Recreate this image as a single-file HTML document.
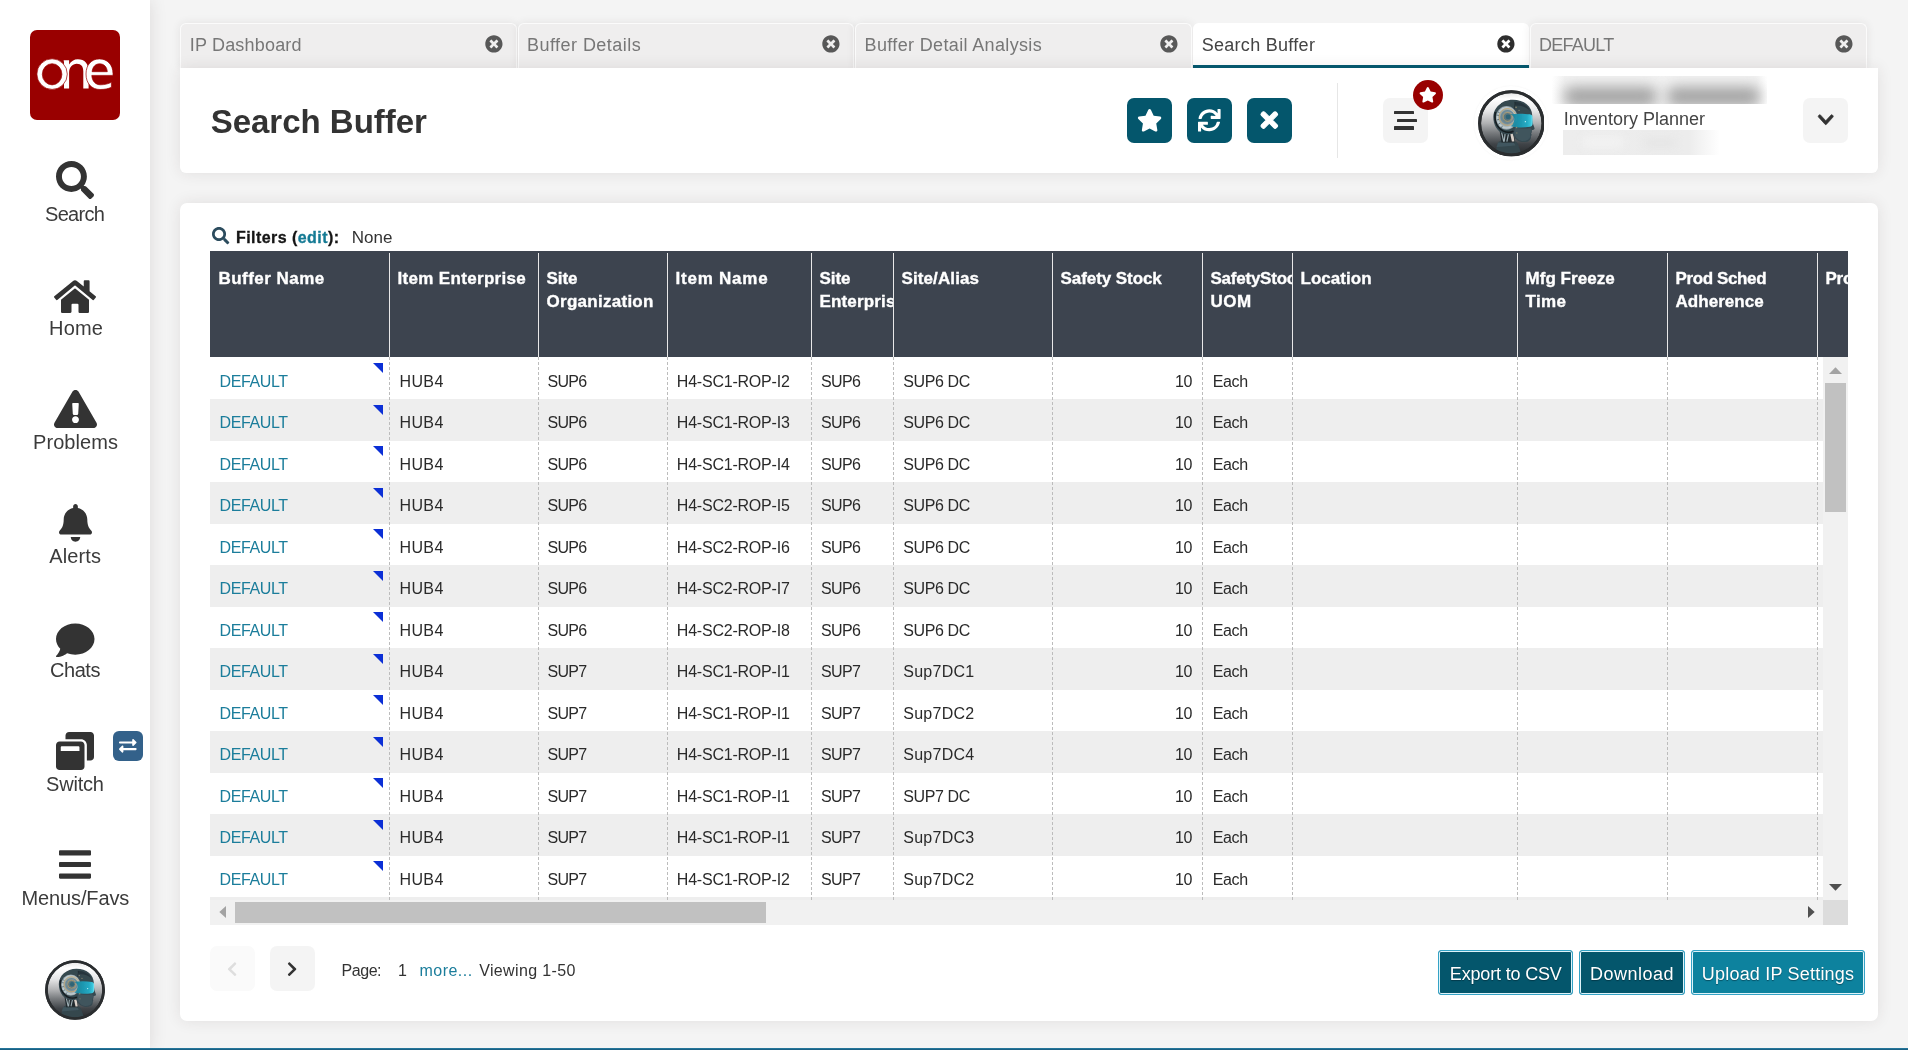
<!DOCTYPE html>
<html>
<head>
<meta charset="utf-8">
<title>Search Buffer</title>
<style>
*{box-sizing:border-box;margin:0;padding:0}
html,body{width:1908px;height:1050px;overflow:hidden}
body{background:#f4f4f4;font-family:"Liberation Sans",sans-serif;color:#333;position:relative}
.abs{position:absolute}
svg{display:block}
/* sidebar */
#side{position:absolute;left:0;top:0;width:150px;height:1050px;background:#fff;box-shadow:0 0 16px rgba(60,40,40,.13)}
#logo{position:absolute;left:30px;top:30px;width:90px;height:90px;border-radius:7px;background:#990000}
.nav{position:absolute;left:0;width:150px;text-align:center;font-size:20px;color:#3a3a3a;line-height:24px;white-space:nowrap}
.nav svg{position:absolute}
.nav span{position:absolute;left:0;width:150px;top:0}
#bottomline{position:absolute;left:0;top:1048.4px;width:1908px;height:1.6px;background:linear-gradient(#2a7fa3,#14567a)}
/* tabs */
.tab{position:absolute;top:23px;height:45px;width:336.6px;background:#efeeee;border:1px solid #fbfbfb;border-bottom:none;box-shadow:0 0 10px rgba(60,40,40,.09);border-radius:6px 6px 0 0;font-size:18px;color:#777;line-height:42px;padding-left:9px;white-space:nowrap}
.tab.active{background:#fff;color:#444;border-color:#fff;box-shadow:none}
.tab.active:after{content:"";position:absolute;left:-1px;right:-1px;bottom:0;height:3px;background:#045a70}
.tab svg{position:absolute;right:14px;top:12px}
/* header panel */
#hdr{position:absolute;left:180px;top:68px;width:1698px;height:105px;background:#fff;border-radius:0 0 6px 6px;box-shadow:0 0 15px rgba(60,40,40,.10)}
#title{position:absolute;left:30px;top:31px;font-size:33px;font-weight:bold;color:#333;line-height:44px;white-space:nowrap}
.sqbtn{position:absolute;width:45px;height:45px;border-radius:7px;background:#04566c}
.sqbtn.light{background:#f4f4f4}
.sqbtn svg{position:absolute}
/* main panel */
#main{position:absolute;left:180px;top:203px;width:1698px;height:818px;background:#fff;border-radius:7px;box-shadow:0 0 15px rgba(60,40,40,.10)}
#filters_unused{position:absolute;left:56px;top:24px;font-size:16px;font-weight:bold;color:#222;line-height:20px;white-space:nowrap}
#filters a{color:#1a7c96}
#filters .none{font-weight:normal;font-size:17px;color:#333;margin-left:12px}
#ghead{position:absolute;left:210px;top:251px;width:1638px;height:106px;background:#3d444f;overflow:hidden}
.hc{position:absolute;top:0;height:106px;overflow:hidden}
.hc:before{content:"";position:absolute;left:0;top:2px;bottom:0;width:1px;background:#e8e8e8}
.hc.first:before{display:none}
#gbody{position:absolute;left:210px;top:357px;width:1613px;height:542.5px;overflow:hidden;background:#fff}
.row{position:absolute;left:0;width:1613px;height:41.5px;font-size:16px;line-height:20px;color:#2a2a2a}
.row.alt{background:#eeeeee}
.c{position:absolute;top:0;height:42px;padding:14px 10px 0 10px;white-space:nowrap;overflow:hidden}
.c.sep{border-left:1px dashed #bdbdbd}
.c.num{text-align:right}
.c a{color:#1b7d9b;text-decoration:none}
.tri{position:absolute;left:163px;top:7px;width:0;height:0;border-top:10px solid #0b2fd6;border-left:10px solid transparent}
#vsb{position:absolute;left:1823px;top:357px;width:25px;height:542.5px;background:#f1f1f1}
#hsb{position:absolute;left:210px;top:899.5px;width:1613px;height:25px;background:#f1f1f1}
#corner{position:absolute;left:1823px;top:899.5px;width:25px;height:25px;background:#dcdcdc}
.pbtn{position:absolute;top:946px;width:45px;height:45px;border-radius:7px;background:#f4f4f4}
.pbtn svg{position:absolute}
#pager{position:absolute;left:161px;top:756px;font-size:16px;line-height:20px;color:#333;white-space:nowrap}
#pager a{color:#1b7d9b}
.btn{position:absolute;top:950px;height:45px;border:1px solid #35a3c6;border-radius:3px;background:#04566c;box-shadow:inset 0 0 0 1px #def3f9}
.btn.hi{background:#0d829e}
#wrap{position:absolute;left:0;top:0;width:1908px;height:1050px;will-change:transform}
.t{position:absolute;white-space:nowrap}
.t.h{font-size:17px;line-height:22px;font-weight:bold;color:#fff;-webkit-text-stroke:.35px #fff}
.vsep{position:absolute;top:0;width:0;height:543px;border-left:1px dashed #bcbcbc}
.tri{position:absolute;left:163px;width:0;height:0;border-top:10px solid #0b2fd6;border-left:10px solid transparent}
</style>
</head>
<body>
<svg width="0" height="0" style="position:absolute"><defs>
<linearGradient id="avbg" x1="0" y1="0" x2="0" y2="1"><stop offset="0" stop-color="#e9e9e9"/><stop offset=".10" stop-color="#ffffff"/><stop offset=".30" stop-color="#e6e6e7"/><stop offset=".5" stop-color="#b0b1b3"/><stop offset=".66" stop-color="#777a7d"/><stop offset=".84" stop-color="#404448"/><stop offset="1" stop-color="#2a2d30"/></linearGradient>
<linearGradient id="avvis" x1="0" x2="1" y1="0" y2="0"><stop offset="0" stop-color="#1a7389" stop-opacity=".6"/><stop offset=".2" stop-color="#1b8aa3" stop-opacity=".97"/><stop offset=".75" stop-color="#22a9c3"/><stop offset=".93" stop-color="#3cc6dc"/><stop offset="1" stop-color="#7be9f8"/></linearGradient>
<radialGradient id="avgear" cx=".5" cy=".5" r=".5"><stop offset="0" stop-color="#3f5f6d"/><stop offset=".4" stop-color="#6f8892"/><stop offset=".68" stop-color="#9aabb1"/><stop offset=".86" stop-color="#c3ced2"/><stop offset="1" stop-color="#8a9ba1"/></radialGradient>
<filter id="avblur" x="-5%" y="-5%" width="110%" height="110%"><feGaussianBlur stdDeviation=".38"/></filter>
<clipPath id="avclip"><circle cx="33.250" cy="33.250" r="30.400"/></clipPath>
<symbol id="avatar" viewBox="0 0 66.5 66.5">
<circle cx="33.250" cy="33.250" r="33.100" fill="#2a2d2f"/>
<circle cx="33.250" cy="33.250" r="30.300" fill="url(#avbg)"/>
<g clip-path="url(#avclip)"><g filter="url(#avblur)">
<path d="M16.500 64l4-12l3.500-2.300h11l4.500 3.300l4 11.500z" fill="#34464d"/>
<path d="M20 52.500l15.500-.5l2 3.500l-19 1.500z" fill="#41565e"/>
<path d="M21.500 40h15v12.500h-13z" fill="#20292d"/>
<path d="M23.300 41l2.400 10.500M27.400 41l-1.300 10.500M31 41.500l-2.200 10" stroke="#9fb0b6" stroke-width="1.200" fill="none"/>
<path d="M31.800 42l2 9.500h2.400l-1-9.500z" fill="#d9d0c8"/>
<path d="M15.300 27c0-9.500 8.500-17.200 19.500-17.200c11.200 0 19.300 6.800 19.300 15.500c0 3.600.2 6.600 1.200 9.700l1.100 2.900c.3.800-.1 1.400-1 1.700l-2 .7c.5 1.300.4 2.200-.4 3.100c.8 1 .6 2-.2 2.800c.3 2.300-.6 4.300-2.700 5.100c-2.700 1-6.100 1-9.100-.2c-3-1.200-5.800-4.200-6.400-7.400c-3 .9-6.500.9-9.600-.3c-6-2.300-9.700-8.900-9.700-16.800z" fill="#364850"/>
<path d="M37 37.500c4.500 1.200 10.500 1.400 15.500.5l1.500 2.500l-1.800 3l.2 3c-1 3.500-5 5-9.500 4.200c-3.500-.8-6.200-4-6.900-8.200z" fill="#3f545d"/>
<path d="M36 11.800c7 0 13.500 3.200 16.300 9.500c-3.300-4.200-9.300-6-14.800-5.500z" fill="#28363c"/>
<path d="M37.200 12.200l-1.600 10" stroke="#1c2529" stroke-width=".6"/>
<ellipse cx="28.600" cy="27.800" rx="10.800" ry="11.800" fill="url(#avgear)"/>
<path d="M17.400 22c-1.400 7.300.6 15 7.500 18.800c3.300 1.700 7.700 1.600 10.500.3" stroke="#161d20" stroke-width="1.600" fill="none"/>
<path d="M19 21.500l2.500 1.200M18.300 25l2.600.4M18.500 30l2.500-.6M20 34.500l2.200-1.500M23 38l1.500-2.200" stroke="#52666e" stroke-width=".8"/>
<circle cx="29.500" cy="26.900" r="8.400" fill="none" stroke="#c9a566" stroke-width=".800"/>
<circle cx="29.500" cy="26.900" r="6.300" fill="none" stroke="#6d8994" stroke-width="1.300"/>
<circle cx="29.500" cy="26.900" r="4.400" fill="#58757f" stroke="#c9a566" stroke-width=".750"/>
<circle cx="30" cy="26.900" r="2.400" fill="#2f6577"/>
<path d="M31.500 24.300c6.500-.9 14.500-.9 20.300 0c1.700.3 2.700 1.500 2.700 3.200v6c0 1.800-1 3-2.700 3.300c-6.600 1.100-13.600.9-19.300-.5c2.400-1.600 3.800-4.900 3.700-7.400c-.1-2.200-1.500-4-4.700-4.600z" fill="url(#avvis)"/>
<circle cx="47.300" cy="31.600" r=".7" fill="#c8f6fc"/>
<circle cx="38" cy="17.300" r=".800" fill="#8e8a6e"/><circle cx="41" cy="20.300" r=".700" fill="#8e8a6e"/><circle cx="38.500" cy="37.500" r=".800" fill="#8e8a6e"/><circle cx="38.800" cy="43" r=".700" fill="#7d7c66"/>
</g></g>
<circle cx="33.250" cy="33.250" r="31.600" fill="none" stroke="#2a2d2f" stroke-width="3"/>
</symbol>
</defs></svg>

<div id="wrap">
<div id="side">
<div id="logo"><svg width="90" height="90" viewBox="0 0 90 90"><g fill="#fff"><path d="M33.600 30.300h5.500v4.200c2-3.200 5-5.200 8.700-5.200c7 0 10.800 4.600 10.800 11.700v17.600h-5.300v-17.200c0-4.800-2.100-7.600-6.500-7.600c-4.500 0-7.700 3.800-7.700 8.800v16h-5.100v-26.300z"/><path fill-rule="evenodd" stroke="#990000" stroke-width=".7" d="M6.900 44.100a15.200 15.300 0 1 0 30.400 0a15.200 15.300 0 1 0 -30.400 0zM12.300 44.300a9.800 10.600 0 1 0 19.600 0a9.800 10.600 0 1 0 -19.600 0z"/><path fill-rule="evenodd" stroke="#990000" stroke-width=".7" d="M83 45.400H61.800c.3 5.600 3.600 9.400 8.700 9.400c4.200 0 7.800-1 10.900-2.500v5c-3.200 1.500-6.900 2.200-11.300 2.200c-8.500 0-14.100-6.100-14.100-15.500c0-9 5.300-15.100 13.400-15.100c7.800 0 13.600 5.600 13.600 14.700zM62.100 41.700h15.200c-.4-4.900-3.300-7.900-7.700-7.900c-4.300 0-7 3.100-7.500 7.900z"/></g></svg>
</div>
<svg style="position:absolute;left:56px;top:161px;overflow:visible" width="38" height="38" viewBox="0 0 512 512" preserveAspectRatio="none"><path fill="#333" d="M505 442.7L405.3 343c-4.5-4.5-10.6-7-17-7H372c27.6-35.3 44-79.700 44-128C416 93.100 322.900 0 208 0S0 93.100 0 208s93.100 208 208 208c48.300 0 92.700-16.400 128-44v16.300c0 6.400 2.500 12.500 7 17l99.700 99.700c9.400 9.400 24.600 9.400 33.900 0l28.300-28.300c9.400-9.400 9.400-24.600.1-34zM208 336c-70.700 0-128-57.200-128-128 0-70.700 57.200-128 128-128 70.700 0 128 57.200 128 128 0 70.700-57.200 128-128 128z"/></svg>
<svg style="position:absolute;left:54px;top:278px;overflow:visible" width="42" height="37.3" viewBox="0 0 576 512" preserveAspectRatio="none"><path fill="#333" d="M280.370 148.260L96 300.110V464a16 16 0 0 0 16 16l112.060-.290a16 16 0 0 0 15.920-16V368a16 16 0 0 1 16-16h64a16 16 0 0 1 16 16v95.640a16 16 0 0 0 16 16.050L464 480a16 16 0 0 0 16-16V300L295.670 148.260a12.190 12.190 0 0 0-15.300 0zM571.600 251.470L488 182.560V44.050a12 12 0 0 0-12-12h-56a12 12 0 0 0-12 12v72.610L318.470 43a48 48 0 0 0-61 0L4.340 251.470a12 12 0 0 0-1.600 16.900l25.500 31A12 12 0 0 0 45.150 301l235.220-193.740a12.190 12.190 0 0 1 15.300 0L530.900 301a12 12 0 0 0 16.900-1.600l25.500-31a12 12 0 0 0-1.700-16.930z"/></svg>
<svg style="position:absolute;left:53.5px;top:389.5px;overflow:visible" width="43" height="38" viewBox="0 0 576 512" preserveAspectRatio="none"><path fill="#333" d="M569.517 440.013C587.975 472.007 564.806 512 527.940 512H48.054c-36.937 0-59.999-40.055-41.577-71.987L246.423 23.985c18.467-32.009 64.720-31.951 83.154 0l239.940 416.028zM288 354c-25.405 0-46 20.595-46 46s20.595 46 46 46 46-20.595 46-46-20.595-46-46-46zm-43.673-165.346l7.418 136c.347 6.364 5.609 11.346 11.982 11.346h48.546c6.373 0 11.635-4.982 11.982-11.346l7.418-136c.375-6.874-5.098-12.654-11.982-12.654h-63.383c-6.884 0-12.356 5.780-11.981 12.654z"/></svg>
<svg style="position:absolute;left:58.5px;top:504px;overflow:visible" width="33" height="37.7" viewBox="0 0 448 512" preserveAspectRatio="none"><path fill="#333" d="M224 512c35.320 0 63.970-28.650 63.970-64H160.030c0 35.350 28.650 64 63.970 64zm215.390-149.710c-19.320-20.760-55.470-51.990-55.470-154.290 0-77.700-54.480-139.900-127.940-155.160V32c0-17.670-14.320-32-31.980-32s-31.980 14.330-31.980 32v20.840C118.560 68.100 64.080 130.300 64.080 208c0 102.300-36.150 133.530-55.470 154.290-6 6.450-8.660 14.160-8.610 21.710.110 16.400 12.980 32 32.100 32h383.800c19.120 0 32-15.600 32.100-32 .050-7.550-2.610-15.270-8.610-21.710z"/></svg>
<svg style="position:absolute;left:55.5px;top:621.2px;overflow:visible" width="38.5" height="38.5" viewBox="0 0 512 512" preserveAspectRatio="none"><path fill="#333" d="M256 32C114.600 32 0 125.100 0 240c0 49.600 21.400 95 57 130.700C44.500 421.100 2.700 466 2.200 466.500c-2.200 2.300-2.800 5.700-1.500 8.700S4.800 480 8 480c66.300 0 116-31.800 140.600-51.400 32.700 12.300 69 19.400 107.400 19.400 141.400 0 256-93.100 256-208S397.400 32 256 32z"/></svg>
<svg style="position:absolute;left:56px;top:731.5px;overflow:visible" width="38" height="38" viewBox="0 0 512 512" preserveAspectRatio="none"><path fill="#333" d="M512 48v288c0 26.500-21.500 48-48 48h-48V176c0-44.100-35.900-80-80-80H128V48c0-26.500 21.500-48 48-48h288c26.500 0 48 21.500 48 48zM384 176v288c0 26.500-21.500 48-48 48H48c-26.500 0-48-21.500-48-48V176c0-26.500 21.500-48 48-48h288c26.500 0 48 21.500 48 48zm-68 28c0-6.600-5.400-12-12-12H76c-6.600 0-12 5.400-12 12v52h252v-52z"/></svg>
<svg style="position:absolute;left:59px;top:845.5px;overflow:visible" width="32" height="37" viewBox="0 0 448 512" preserveAspectRatio="none"><path fill="#333" d="M16 132h416c8.837 0 16-7.163 16-16V76c0-8.837-7.163-16-16-16H16C7.163 60 0 67.163 0 76v40c0 8.837 7.163 16 16 16zm0 160h416c8.837 0 16-7.163 16-16v-40c0-8.837-7.163-16-16-16H16c-8.837 0-16 7.163-16 16v40c0 8.837 7.163 16 16 16zm0 160h416c8.837 0 16-7.163 16-16v-40c0-8.837-7.163-16-16-16H16c-8.837 0-16 7.163-16 16v40c0 8.837 7.163 16 16 16z"/></svg>
<span class="t" style="left:45.00px;top:202px;font-size:20px;line-height:25px;letter-spacing:-0.675px;color:#3b3b3b;">Search</span>
<span class="t" style="left:49.00px;top:316px;font-size:20px;line-height:25px;letter-spacing:0.208px;color:#3b3b3b;">Home</span>
<span class="t" style="left:33.00px;top:430px;font-size:20px;line-height:25px;letter-spacing:0.071px;color:#3b3b3b;">Problems</span>
<span class="t" style="left:49.20px;top:544px;font-size:20px;line-height:25px;letter-spacing:0.135px;color:#3b3b3b;">Alerts</span>
<span class="t" style="left:50.00px;top:658px;font-size:20px;line-height:25px;letter-spacing:-0.462px;color:#3b3b3b;">Chats</span>
<span class="t" style="left:46.00px;top:772px;font-size:20px;line-height:25px;letter-spacing:-0.188px;color:#3b3b3b;">Switch</span>
<span class="t" style="left:21.60px;top:886px;font-size:20px;line-height:25px;letter-spacing:-0.137px;color:#3b3b3b;">Menus/Favs</span>
<div class="abs" style="left:113px;top:731px;width:30px;height:30px;border-radius:6px;background:#33618a"><svg style="position:absolute;left:6.2px;top:6.2px;overflow:visible" width="17.6" height="17.6" viewBox="0 0 512 512" preserveAspectRatio="none"><path fill="#fff" d="M0 168v-16c0-13.255 10.745-24 24-24h360V80c0-21.367 25.899-32.042 40.971-16.971l80 80c9.372 9.373 9.372 24.569 0 33.941l-80 80C409.956 271.982 384 261.456 384 240v-48H24c-13.255 0-24-10.745-24-24zm488 152H128v-48c0-21.314-25.862-32.080-40.971-16.971l-80 80c-9.372 9.373-9.372 24.569 0 33.941l80 80C102.057 463.997 128 453.437 128 432v-48h360c13.255 0 24-10.745 24-24v-16c0-13.255-10.745-24-24-24z"/></svg></div>
<svg style="position:absolute;left:45px;top:960px" width="60" height="60"><use href="#avatar" width="60" height="60"/></svg>

</div>
<div id="bottomline"></div>
<div class="tab" style="left:180.4px"></div>
<div class="tab" style="left:517.8px"></div>
<div class="tab" style="left:855.2px"></div>
<div class="tab active" style="left:1192.6px"></div>
<div class="tab" style="left:1530.0px"></div>
<span class="t" style="left:189.70px;top:34px;font-size:18px;line-height:22px;letter-spacing:0.195px;color:#777;">IP Dashboard</span>
<svg style="position:absolute;left:485.0px;top:35.1px;overflow:visible" width="17.8" height="17.8" viewBox="0 0 512 512" preserveAspectRatio="none"><path fill="#585858" d="M256 8C119 8 8 119 8 256s111 248 248 248 248-111 248-248S393 8 256 8zm121.600 313.100c4.700 4.700 4.700 12.300 0 17L338 377.600c-4.700 4.700-12.300 4.700-17 0L256 312l-65.100 65.600c-4.700 4.700-12.300 4.700-17 0L134.400 338c-4.700-4.700-4.700-12.300 0-17l65.600-65-65.600-65.100c-4.700-4.700-4.700-12.300 0-17l39.600-39.600c4.700-4.700 12.300-4.700 17 0l65 65.700 65.100-65.600c4.700-4.700 12.300-4.700 17 0l39.600 39.600c4.700 4.700 4.700 12.300 0 17L312 256l65.600 65.100z"/></svg>
<span class="t" style="left:527.00px;top:34px;font-size:18px;line-height:22px;letter-spacing:0.458px;color:#777;">Buffer Details</span>
<svg style="position:absolute;left:822.4px;top:35.1px;overflow:visible" width="17.8" height="17.8" viewBox="0 0 512 512" preserveAspectRatio="none"><path fill="#585858" d="M256 8C119 8 8 119 8 256s111 248 248 248 248-111 248-248S393 8 256 8zm121.600 313.100c4.700 4.700 4.700 12.300 0 17L338 377.600c-4.700 4.700-12.300 4.700-17 0L256 312l-65.100 65.600c-4.700 4.700-12.300 4.700-17 0L134.400 338c-4.700-4.700-4.700-12.300 0-17l65.600-65-65.600-65.100c-4.700-4.700-4.700-12.300 0-17l39.600-39.600c4.700-4.700 12.300-4.700 17 0l65 65.700 65.100-65.600c4.700-4.700 12.300-4.700 17 0l39.600 39.600c4.700 4.700 4.700 12.300 0 17L312 256l65.600 65.100z"/></svg>
<span class="t" style="left:864.60px;top:34px;font-size:18px;line-height:22px;letter-spacing:0.350px;color:#777;">Buffer Detail Analysis</span>
<svg style="position:absolute;left:1159.8000000000002px;top:35.1px;overflow:visible" width="17.8" height="17.8" viewBox="0 0 512 512" preserveAspectRatio="none"><path fill="#585858" d="M256 8C119 8 8 119 8 256s111 248 248 248 248-111 248-248S393 8 256 8zm121.600 313.100c4.700 4.700 4.700 12.300 0 17L338 377.600c-4.700 4.700-12.300 4.700-17 0L256 312l-65.100 65.600c-4.700 4.700-12.300 4.700-17 0L134.400 338c-4.700-4.700-4.700-12.300 0-17l65.600-65-65.600-65.100c-4.700-4.700-4.700-12.300 0-17l39.600-39.600c4.700-4.700 12.300-4.700 17 0l65 65.700 65.100-65.600c4.700-4.700 12.300-4.700 17 0l39.600 39.600c4.700 4.700 4.700 12.300 0 17L312 256l65.600 65.100z"/></svg>
<span class="t" style="left:1201.70px;top:34px;font-size:18px;line-height:22px;letter-spacing:0.288px;color:#444;">Search Buffer</span>
<svg style="position:absolute;left:1497.1999999999998px;top:35.1px;overflow:visible" width="17.8" height="17.8" viewBox="0 0 512 512" preserveAspectRatio="none"><path fill="#2e2e2e" d="M256 8C119 8 8 119 8 256s111 248 248 248 248-111 248-248S393 8 256 8zm121.600 313.100c4.700 4.700 4.700 12.300 0 17L338 377.600c-4.700 4.700-12.300 4.700-17 0L256 312l-65.100 65.600c-4.700 4.700-12.300 4.700-17 0L134.400 338c-4.700-4.700-4.700-12.300 0-17l65.600-65-65.600-65.100c-4.700-4.700-4.700-12.300 0-17l39.600-39.600c4.700-4.700 12.300-4.700 17 0l65 65.700 65.100-65.600c4.700-4.700 12.300-4.700 17 0l39.600 39.600c4.700 4.700 4.700 12.300 0 17L312 256l65.600 65.100z"/></svg>
<span class="t" style="left:1539.10px;top:34px;font-size:18px;line-height:22px;letter-spacing:-0.765px;color:#777;">DEFAULT</span>
<svg style="position:absolute;left:1834.6px;top:35.1px;overflow:visible" width="17.8" height="17.8" viewBox="0 0 512 512" preserveAspectRatio="none"><path fill="#585858" d="M256 8C119 8 8 119 8 256s111 248 248 248 248-111 248-248S393 8 256 8zm121.600 313.100c4.700 4.700 4.700 12.300 0 17L338 377.600c-4.700 4.700-12.300 4.700-17 0L256 312l-65.100 65.600c-4.700 4.700-12.300 4.700-17 0L134.400 338c-4.700-4.700-4.700-12.300 0-17l65.600-65-65.600-65.100c-4.700-4.700-4.700-12.300 0-17l39.600-39.600c4.700-4.700 12.300-4.700 17 0l65 65.700 65.100-65.600c4.700-4.700 12.300-4.700 17 0l39.600 39.600c4.700 4.700 4.700 12.300 0 17L312 256l65.600 65.100z"/></svg>
<div id="hdr"></div>
<span class="t" style="left:210.70px;top:101px;font-size:33px;line-height:41px;letter-spacing:-0.011px;font-weight:bold;color:#333;">Search Buffer</span>
<div class="sqbtn" style="left:1127px;top:98px"><svg style="position:absolute;left:9.6px;top:10.6px;overflow:visible" width="25.2" height="22.6" viewBox="0 0 576 512" preserveAspectRatio="none"><path fill="#fff" d="M259.300 17.800L194 150.200 47.900 171.500c-26.200 3.800-36.700 36.100-17.700 54.600l105.700 103-25 145.500c-4.500 26.300 23.200 46 46.400 33.700L288 439.600l130.700 68.700c23.200 12.200 50.900-7.400 46.400-33.700l-25-145.500 105.700-103c19-18.500 8.500-50.800-17.700-54.600L382 150.200 316.700 17.800c-11.700-23.600-45.600-23.900-57.400 0z"/></svg></div>
<div class="sqbtn" style="left:1187px;top:98px"><svg style="position:absolute;left:11.2px;top:11.2px;overflow:visible" width="22.6" height="22.6" viewBox="0 0 512 512" preserveAspectRatio="none"><path fill="#fff" d="M440.650 12.570l4 82.770A247.160 247.160 0 0 0 255.830 8C134.730 8 33.910 94.920 12.290 209.820A12 12 0 0 0 24.090 224h49.050a12 12 0 0 0 11.670-9.260 175.910 175.910 0 0 1 317-56.940l-101.460-4.860a12 12 0 0 0-12.570 12v47.410a12 12 0 0 0 12 12H500a12 12 0 0 0 12-12V12a12 12 0 0 0-12-12h-47.370a12 12 0 0 0-11.980 12.570zM255.830 432a175.610 175.610 0 0 1-146-77.800l101.800 4.870a12 12 0 0 0 12.570-12v-47.400a12 12 0 0 0-12-12H12a12 12 0 0 0-12 12V500a12 12 0 0 0 12 12h47.350a12 12 0 0 0 12-12.600l-4.150-82.570A247.170 247.170 0 0 0 255.830 504c121.110 0 221.930-86.920 243.550-201.820a12 12 0 0 0-11.800-14.180h-49.050a12 12 0 0 0-11.670 9.260A175.860 175.860 0 0 1 255.830 432z"/></svg></div>
<div class="sqbtn" style="left:1247px;top:98px"><svg style="position:absolute;left:14.2px;top:10.4px;overflow:visible" width="16.6" height="24.2" viewBox="0 0 352 512" preserveAspectRatio="none"><path fill="#fff" stroke="#fff" stroke-width="22" stroke-linejoin="round" d="M242.720 256l100.070-100.070c12.280-12.280 12.280-32.190 0-44.480l-22.240-22.240c-12.280-12.280-32.190-12.280-44.480 0L176 189.280 75.930 89.210c-12.280-12.280-32.190-12.280-44.480 0L9.210 111.450c-12.280 12.280-12.280 32.190 0 44.480L109.280 256 9.210 356.070c-12.280 12.280-12.280 32.190 0 44.480l22.240 22.240c12.280 12.280 32.200 12.280 44.480 0L176 322.720l100.070 100.070c12.280 12.280 32.200 12.280 44.480 0l22.240-22.240c12.280-12.280 12.280-32.190 0-44.480L242.720 256z"/></svg></div>
<div class="abs" style="left:1337px;top:83px;width:1px;height:75px;background:#e6e6e6"></div>
<div class="sqbtn light" style="left:1383px;top:98px"><div class="abs" style="left:11.2px;top:12.5px;width:20.2px;height:3.9px;background:#333;border-radius:.6px"></div><div class="abs" style="left:13.8px;top:20.5px;width:20px;height:3.9px;background:#333;border-radius:.6px"></div><div class="abs" style="left:11.2px;top:28.4px;width:20.2px;height:3.7px;background:#333;border-radius:.6px"></div></div>
<div class="abs" style="left:1413px;top:80px;width:30px;height:30px;border-radius:15px;background:#990000"><svg style="position:absolute;left:6.3px;top:6.8px;overflow:visible" width="17.6" height="15.6" viewBox="0 0 576 512" preserveAspectRatio="none"><path fill="#fff" d="M259.300 17.800L194 150.200 47.900 171.500c-26.200 3.800-36.700 36.100-17.700 54.600l105.700 103-25 145.500c-4.500 26.300 23.200 46 46.400 33.700L288 439.600l130.700 68.700c23.200 12.200 50.900-7.400 46.400-33.700l-25-145.500 105.700-103c19-18.500 8.500-50.800-17.700-54.600L382 150.200 316.700 17.800c-11.700-23.600-45.600-23.900-57.400 0z"/></svg></div>
<div class="abs" style="left:1474px;top:86px;width:74px;height:74px;border-radius:37px;background:#fff;box-shadow:0 0 2px rgba(0,0,0,.05)"></div>
<svg style="position:absolute;left:1477.700px;top:90px" width="66.6" height="66.6"><use href="#avatar" width="66.6" height="66.6"/></svg>

<div class="abs" style="left:1552px;top:75.7px;width:215px;height:28px;background:linear-gradient(90deg,#fff 0,#f2f2f2 6%,#f2f2f2 95%,#fff 100%);overflow:hidden"><div class="abs" style="left:12px;top:11px;width:93px;height:19px;background:#a2a2a2;filter:blur(7px);border-radius:8px"></div><div class="abs" style="left:115px;top:11px;width:93px;height:19px;background:#a2a2a2;filter:blur(7px);border-radius:8px"></div></div>
<span class="t" style="left:1563.80px;top:108px;font-size:18px;line-height:22px;letter-spacing:0.009px;color:#444;">Inventory Planner</span>
<div class="abs" style="left:1563.2px;top:130.1px;width:157px;height:24.8px;background:linear-gradient(90deg,#ededed 0,#ececec 80%,#fff 100%);overflow:hidden"><div class="abs" style="left:20px;top:7px;width:40px;height:10px;background:#f3f3f3;filter:blur(5px)"></div><div class="abs" style="left:82px;top:9px;width:30px;height:8px;background:#e4e4e4;filter:blur(5px)"></div></div>
<div class="sqbtn light" style="left:1803px;top:98px"><svg style="position:absolute;left:14.7px;top:12.3px;overflow:visible" width="15.5" height="19.3" viewBox="0 0 448 512" preserveAspectRatio="none"><path fill="#333" stroke="#333" stroke-width="18" stroke-linejoin="round" d="M207.029 381.476L12.686 187.132c-9.373-9.373-9.373-24.569 0-33.941l22.667-22.667c9.357-9.357 24.522-9.375 33.901-.040L224 284.505l154.745-154.021c9.379-9.335 24.544-9.317 33.901.040l22.667 22.667c9.373 9.373 9.373 24.569 0 33.941L240.971 381.476c-9.373 9.372-24.569 9.372-33.942 0z"/></svg></div>
<div id="main"></div>
<svg style="position:absolute;left:212.3px;top:227.4px;overflow:visible;filter:blur(.3px)" width="17.3" height="17.3" viewBox="0 0 512 512" preserveAspectRatio="none"><path fill="#2c4c5e" d="M505 442.7L405.3 343c-4.5-4.5-10.6-7-17-7H372c27.6-35.3 44-79.700 44-128C416 93.100 322.900 0 208 0S0 93.100 0 208s93.100 208 208 208c48.300 0 92.700-16.400 128-44v16.300c0 6.400 2.500 12.500 7 17l99.700 99.700c9.400 9.400 24.600 9.400 33.900 0l28.300-28.300c9.400-9.400 9.400-24.600.1-34zM208 336c-70.700 0-128-57.200-128-128 0-70.700 57.200-128 128-128 70.700 0 128 57.200 128 128 0 70.700-57.200 128-128 128z"/></svg>
<span class="t" style="left:236.00px;top:228px;font-size:16px;line-height:20px;letter-spacing:0.438px;font-weight:bold;color:#151515;-webkit-text-stroke:.3px #151515;">Filters (<span style="color:#147a94;-webkit-text-stroke:.3px #147a94">edit</span>):</span>
<span class="t" style="left:351.70px;top:227px;font-size:17px;line-height:21px;letter-spacing:0.058px;color:#333;">None</span>
<div id="ghead">
<div class="hc first" style="left:0px;width:179px"><span class="t h" style="left:8.50px;top:17px;letter-spacing:0.464px">Buffer Name</span></div>
<div class="hc" style="left:179px;width:149px"><span class="t h" style="left:8.50px;top:17px;letter-spacing:0.325px">Item Enterprise</span></div>
<div class="hc" style="left:328px;width:129px"><span class="t h" style="left:8.50px;top:17px;letter-spacing:-0.062px">Site</span><span class="t h" style="left:8.50px;top:40px;letter-spacing:0.275px">Organization</span></div>
<div class="hc" style="left:457px;width:144px"><span class="t h" style="left:8.50px;top:17px;letter-spacing:0.775px">Item Name</span></div>
<div class="hc" style="left:601px;width:82px"><span class="t h" style="left:8.50px;top:17px;letter-spacing:-0.062px">Site</span><span class="t h" style="left:8.50px;top:40px;letter-spacing:0.160px">Enterprise</span></div>
<div class="hc" style="left:683px;width:159px"><span class="t h" style="left:8.50px;top:17px;letter-spacing:0.104px">Site/Alias</span></div>
<div class="hc" style="left:842px;width:150px"><span class="t h" style="left:8.50px;top:17px;letter-spacing:-0.069px">Safety Stock</span></div>
<div class="hc" style="left:992px;width:90px"><span class="t h" style="left:8.50px;top:17px;letter-spacing:-0.237px">SafetyStock</span><span class="t h" style="left:8.50px;top:40px;letter-spacing:0.456px">UOM</span></div>
<div class="hc" style="left:1082px;width:225px"><span class="t h" style="left:8.50px;top:17px;letter-spacing:0.027px">Location</span></div>
<div class="hc" style="left:1307px;width:150px"><span class="t h" style="left:8.50px;top:17px;letter-spacing:0.043px">Mfg Freeze</span><span class="t h" style="left:8.50px;top:40px;letter-spacing:0.375px">Time</span></div>
<div class="hc" style="left:1457px;width:150px"><span class="t h" style="left:8.50px;top:17px;letter-spacing:-0.382px">Prod Sched</span><span class="t h" style="left:8.50px;top:40px;letter-spacing:0.041px">Adherence</span></div>
<div class="hc" style="left:1607px;width:31px"><span class="t h" style="left:8.50px;top:17px;letter-spacing:-0.250px">Prod</span></div>
</div>
<div id="gbody">
<div class="row" style="top:1px;height:41px">
<span class="t" style="left:9.60px;top:14px;font-size:16px;line-height:20px;letter-spacing:-0.402px;color:#1b7d9b;">DEFAULT</span>
<i class="tri" style="top:5.4px"></i>
<span class="t" style="left:189.50px;top:14px;font-size:16px;line-height:20px;letter-spacing:0.371px;">HUB4</span>
<span class="t" style="left:337.40px;top:14px;font-size:16px;line-height:20px;letter-spacing:-0.671px;">SUP6</span>
<span class="t" style="left:466.80px;top:14px;font-size:16px;line-height:20px;letter-spacing:-0.214px;">H4-SC1-ROP-I2</span>
<span class="t" style="left:611.00px;top:14px;font-size:16px;line-height:20px;letter-spacing:-0.671px;">SUP6</span>
<span class="t" style="left:693.20px;top:14px;font-size:16px;line-height:20px;letter-spacing:-0.379px;">SUP6 DC</span>
<span class="t" style="left:964.90px;top:14px;font-size:16px;line-height:20px;letter-spacing:-0.312px;">10</span>
<span class="t" style="left:1002.80px;top:14px;font-size:16px;line-height:20px;letter-spacing:-0.400px;">Each</span>
</div>
<div class="row alt" style="top:42px;height:42px">
<span class="t" style="left:9.60px;top:14px;font-size:16px;line-height:20px;letter-spacing:-0.402px;color:#1b7d9b;">DEFAULT</span>
<i class="tri" style="top:5.9px"></i>
<span class="t" style="left:189.50px;top:14px;font-size:16px;line-height:20px;letter-spacing:0.371px;">HUB4</span>
<span class="t" style="left:337.40px;top:14px;font-size:16px;line-height:20px;letter-spacing:-0.671px;">SUP6</span>
<span class="t" style="left:466.80px;top:14px;font-size:16px;line-height:20px;letter-spacing:-0.214px;">H4-SC1-ROP-I3</span>
<span class="t" style="left:611.00px;top:14px;font-size:16px;line-height:20px;letter-spacing:-0.671px;">SUP6</span>
<span class="t" style="left:693.20px;top:14px;font-size:16px;line-height:20px;letter-spacing:-0.379px;">SUP6 DC</span>
<span class="t" style="left:964.90px;top:14px;font-size:16px;line-height:20px;letter-spacing:-0.312px;">10</span>
<span class="t" style="left:1002.80px;top:14px;font-size:16px;line-height:20px;letter-spacing:-0.400px;">Each</span>
</div>
<div class="row" style="top:84px;height:41px">
<span class="t" style="left:9.60px;top:14px;font-size:16px;line-height:20px;letter-spacing:-0.402px;color:#1b7d9b;">DEFAULT</span>
<i class="tri" style="top:5.4px"></i>
<span class="t" style="left:189.50px;top:14px;font-size:16px;line-height:20px;letter-spacing:0.371px;">HUB4</span>
<span class="t" style="left:337.40px;top:14px;font-size:16px;line-height:20px;letter-spacing:-0.671px;">SUP6</span>
<span class="t" style="left:466.80px;top:14px;font-size:16px;line-height:20px;letter-spacing:-0.214px;">H4-SC1-ROP-I4</span>
<span class="t" style="left:611.00px;top:14px;font-size:16px;line-height:20px;letter-spacing:-0.671px;">SUP6</span>
<span class="t" style="left:693.20px;top:14px;font-size:16px;line-height:20px;letter-spacing:-0.379px;">SUP6 DC</span>
<span class="t" style="left:964.90px;top:14px;font-size:16px;line-height:20px;letter-spacing:-0.312px;">10</span>
<span class="t" style="left:1002.80px;top:14px;font-size:16px;line-height:20px;letter-spacing:-0.400px;">Each</span>
</div>
<div class="row alt" style="top:125px;height:42px">
<span class="t" style="left:9.60px;top:14px;font-size:16px;line-height:20px;letter-spacing:-0.402px;color:#1b7d9b;">DEFAULT</span>
<i class="tri" style="top:5.9px"></i>
<span class="t" style="left:189.50px;top:14px;font-size:16px;line-height:20px;letter-spacing:0.371px;">HUB4</span>
<span class="t" style="left:337.40px;top:14px;font-size:16px;line-height:20px;letter-spacing:-0.671px;">SUP6</span>
<span class="t" style="left:466.80px;top:14px;font-size:16px;line-height:20px;letter-spacing:-0.214px;">H4-SC2-ROP-I5</span>
<span class="t" style="left:611.00px;top:14px;font-size:16px;line-height:20px;letter-spacing:-0.671px;">SUP6</span>
<span class="t" style="left:693.20px;top:14px;font-size:16px;line-height:20px;letter-spacing:-0.379px;">SUP6 DC</span>
<span class="t" style="left:964.90px;top:14px;font-size:16px;line-height:20px;letter-spacing:-0.312px;">10</span>
<span class="t" style="left:1002.80px;top:14px;font-size:16px;line-height:20px;letter-spacing:-0.400px;">Each</span>
</div>
<div class="row" style="top:167px;height:41px">
<span class="t" style="left:9.60px;top:14px;font-size:16px;line-height:20px;letter-spacing:-0.402px;color:#1b7d9b;">DEFAULT</span>
<i class="tri" style="top:5.4px"></i>
<span class="t" style="left:189.50px;top:14px;font-size:16px;line-height:20px;letter-spacing:0.371px;">HUB4</span>
<span class="t" style="left:337.40px;top:14px;font-size:16px;line-height:20px;letter-spacing:-0.671px;">SUP6</span>
<span class="t" style="left:466.80px;top:14px;font-size:16px;line-height:20px;letter-spacing:-0.214px;">H4-SC2-ROP-I6</span>
<span class="t" style="left:611.00px;top:14px;font-size:16px;line-height:20px;letter-spacing:-0.671px;">SUP6</span>
<span class="t" style="left:693.20px;top:14px;font-size:16px;line-height:20px;letter-spacing:-0.379px;">SUP6 DC</span>
<span class="t" style="left:964.90px;top:14px;font-size:16px;line-height:20px;letter-spacing:-0.312px;">10</span>
<span class="t" style="left:1002.80px;top:14px;font-size:16px;line-height:20px;letter-spacing:-0.400px;">Each</span>
</div>
<div class="row alt" style="top:208px;height:42px">
<span class="t" style="left:9.60px;top:14px;font-size:16px;line-height:20px;letter-spacing:-0.402px;color:#1b7d9b;">DEFAULT</span>
<i class="tri" style="top:5.9px"></i>
<span class="t" style="left:189.50px;top:14px;font-size:16px;line-height:20px;letter-spacing:0.371px;">HUB4</span>
<span class="t" style="left:337.40px;top:14px;font-size:16px;line-height:20px;letter-spacing:-0.671px;">SUP6</span>
<span class="t" style="left:466.80px;top:14px;font-size:16px;line-height:20px;letter-spacing:-0.214px;">H4-SC2-ROP-I7</span>
<span class="t" style="left:611.00px;top:14px;font-size:16px;line-height:20px;letter-spacing:-0.671px;">SUP6</span>
<span class="t" style="left:693.20px;top:14px;font-size:16px;line-height:20px;letter-spacing:-0.379px;">SUP6 DC</span>
<span class="t" style="left:964.90px;top:14px;font-size:16px;line-height:20px;letter-spacing:-0.312px;">10</span>
<span class="t" style="left:1002.80px;top:14px;font-size:16px;line-height:20px;letter-spacing:-0.400px;">Each</span>
</div>
<div class="row" style="top:250px;height:41px">
<span class="t" style="left:9.60px;top:14px;font-size:16px;line-height:20px;letter-spacing:-0.402px;color:#1b7d9b;">DEFAULT</span>
<i class="tri" style="top:5.4px"></i>
<span class="t" style="left:189.50px;top:14px;font-size:16px;line-height:20px;letter-spacing:0.371px;">HUB4</span>
<span class="t" style="left:337.40px;top:14px;font-size:16px;line-height:20px;letter-spacing:-0.671px;">SUP6</span>
<span class="t" style="left:466.80px;top:14px;font-size:16px;line-height:20px;letter-spacing:-0.214px;">H4-SC2-ROP-I8</span>
<span class="t" style="left:611.00px;top:14px;font-size:16px;line-height:20px;letter-spacing:-0.671px;">SUP6</span>
<span class="t" style="left:693.20px;top:14px;font-size:16px;line-height:20px;letter-spacing:-0.379px;">SUP6 DC</span>
<span class="t" style="left:964.90px;top:14px;font-size:16px;line-height:20px;letter-spacing:-0.312px;">10</span>
<span class="t" style="left:1002.80px;top:14px;font-size:16px;line-height:20px;letter-spacing:-0.400px;">Each</span>
</div>
<div class="row alt" style="top:291px;height:42px">
<span class="t" style="left:9.60px;top:14px;font-size:16px;line-height:20px;letter-spacing:-0.402px;color:#1b7d9b;">DEFAULT</span>
<i class="tri" style="top:5.9px"></i>
<span class="t" style="left:189.50px;top:14px;font-size:16px;line-height:20px;letter-spacing:0.371px;">HUB4</span>
<span class="t" style="left:337.40px;top:14px;font-size:16px;line-height:20px;letter-spacing:-0.671px;">SUP7</span>
<span class="t" style="left:466.80px;top:14px;font-size:16px;line-height:20px;letter-spacing:-0.214px;">H4-SC1-ROP-I1</span>
<span class="t" style="left:611.00px;top:14px;font-size:16px;line-height:20px;letter-spacing:-0.671px;">SUP7</span>
<span class="t" style="left:693.20px;top:14px;font-size:16px;line-height:20px;letter-spacing:0.271px;">Sup7DC1</span>
<span class="t" style="left:964.90px;top:14px;font-size:16px;line-height:20px;letter-spacing:-0.312px;">10</span>
<span class="t" style="left:1002.80px;top:14px;font-size:16px;line-height:20px;letter-spacing:-0.400px;">Each</span>
</div>
<div class="row" style="top:333px;height:41px">
<span class="t" style="left:9.60px;top:14px;font-size:16px;line-height:20px;letter-spacing:-0.402px;color:#1b7d9b;">DEFAULT</span>
<i class="tri" style="top:5.4px"></i>
<span class="t" style="left:189.50px;top:14px;font-size:16px;line-height:20px;letter-spacing:0.371px;">HUB4</span>
<span class="t" style="left:337.40px;top:14px;font-size:16px;line-height:20px;letter-spacing:-0.671px;">SUP7</span>
<span class="t" style="left:466.80px;top:14px;font-size:16px;line-height:20px;letter-spacing:-0.214px;">H4-SC1-ROP-I1</span>
<span class="t" style="left:611.00px;top:14px;font-size:16px;line-height:20px;letter-spacing:-0.671px;">SUP7</span>
<span class="t" style="left:693.20px;top:14px;font-size:16px;line-height:20px;letter-spacing:0.271px;">Sup7DC2</span>
<span class="t" style="left:964.90px;top:14px;font-size:16px;line-height:20px;letter-spacing:-0.312px;">10</span>
<span class="t" style="left:1002.80px;top:14px;font-size:16px;line-height:20px;letter-spacing:-0.400px;">Each</span>
</div>
<div class="row alt" style="top:374px;height:42px">
<span class="t" style="left:9.60px;top:14px;font-size:16px;line-height:20px;letter-spacing:-0.402px;color:#1b7d9b;">DEFAULT</span>
<i class="tri" style="top:5.9px"></i>
<span class="t" style="left:189.50px;top:14px;font-size:16px;line-height:20px;letter-spacing:0.371px;">HUB4</span>
<span class="t" style="left:337.40px;top:14px;font-size:16px;line-height:20px;letter-spacing:-0.671px;">SUP7</span>
<span class="t" style="left:466.80px;top:14px;font-size:16px;line-height:20px;letter-spacing:-0.214px;">H4-SC1-ROP-I1</span>
<span class="t" style="left:611.00px;top:14px;font-size:16px;line-height:20px;letter-spacing:-0.671px;">SUP7</span>
<span class="t" style="left:693.20px;top:14px;font-size:16px;line-height:20px;letter-spacing:0.271px;">Sup7DC4</span>
<span class="t" style="left:964.90px;top:14px;font-size:16px;line-height:20px;letter-spacing:-0.312px;">10</span>
<span class="t" style="left:1002.80px;top:14px;font-size:16px;line-height:20px;letter-spacing:-0.400px;">Each</span>
</div>
<div class="row" style="top:416px;height:41px">
<span class="t" style="left:9.60px;top:14px;font-size:16px;line-height:20px;letter-spacing:-0.402px;color:#1b7d9b;">DEFAULT</span>
<i class="tri" style="top:5.4px"></i>
<span class="t" style="left:189.50px;top:14px;font-size:16px;line-height:20px;letter-spacing:0.371px;">HUB4</span>
<span class="t" style="left:337.40px;top:14px;font-size:16px;line-height:20px;letter-spacing:-0.671px;">SUP7</span>
<span class="t" style="left:466.80px;top:14px;font-size:16px;line-height:20px;letter-spacing:-0.214px;">H4-SC1-ROP-I1</span>
<span class="t" style="left:611.00px;top:14px;font-size:16px;line-height:20px;letter-spacing:-0.671px;">SUP7</span>
<span class="t" style="left:693.20px;top:14px;font-size:16px;line-height:20px;letter-spacing:-0.379px;">SUP7 DC</span>
<span class="t" style="left:964.90px;top:14px;font-size:16px;line-height:20px;letter-spacing:-0.312px;">10</span>
<span class="t" style="left:1002.80px;top:14px;font-size:16px;line-height:20px;letter-spacing:-0.400px;">Each</span>
</div>
<div class="row alt" style="top:457px;height:42px">
<span class="t" style="left:9.60px;top:14px;font-size:16px;line-height:20px;letter-spacing:-0.402px;color:#1b7d9b;">DEFAULT</span>
<i class="tri" style="top:5.9px"></i>
<span class="t" style="left:189.50px;top:14px;font-size:16px;line-height:20px;letter-spacing:0.371px;">HUB4</span>
<span class="t" style="left:337.40px;top:14px;font-size:16px;line-height:20px;letter-spacing:-0.671px;">SUP7</span>
<span class="t" style="left:466.80px;top:14px;font-size:16px;line-height:20px;letter-spacing:-0.214px;">H4-SC1-ROP-I1</span>
<span class="t" style="left:611.00px;top:14px;font-size:16px;line-height:20px;letter-spacing:-0.671px;">SUP7</span>
<span class="t" style="left:693.20px;top:14px;font-size:16px;line-height:20px;letter-spacing:0.271px;">Sup7DC3</span>
<span class="t" style="left:964.90px;top:14px;font-size:16px;line-height:20px;letter-spacing:-0.312px;">10</span>
<span class="t" style="left:1002.80px;top:14px;font-size:16px;line-height:20px;letter-spacing:-0.400px;">Each</span>
</div>
<div class="row" style="top:499px;height:41px">
<span class="t" style="left:9.60px;top:14px;font-size:16px;line-height:20px;letter-spacing:-0.402px;color:#1b7d9b;">DEFAULT</span>
<i class="tri" style="top:5.4px"></i>
<span class="t" style="left:189.50px;top:14px;font-size:16px;line-height:20px;letter-spacing:0.371px;">HUB4</span>
<span class="t" style="left:337.40px;top:14px;font-size:16px;line-height:20px;letter-spacing:-0.671px;">SUP7</span>
<span class="t" style="left:466.80px;top:14px;font-size:16px;line-height:20px;letter-spacing:-0.214px;">H4-SC1-ROP-I2</span>
<span class="t" style="left:611.00px;top:14px;font-size:16px;line-height:20px;letter-spacing:-0.671px;">SUP7</span>
<span class="t" style="left:693.20px;top:14px;font-size:16px;line-height:20px;letter-spacing:0.271px;">Sup7DC2</span>
<span class="t" style="left:964.90px;top:14px;font-size:16px;line-height:20px;letter-spacing:-0.312px;">10</span>
<span class="t" style="left:1002.80px;top:14px;font-size:16px;line-height:20px;letter-spacing:-0.400px;">Each</span>
</div>
<div class="row alt" style="top:540px;height:42px">
</div>
<div class="vsep" style="left:179px"></div>
<div class="vsep" style="left:328px"></div>
<div class="vsep" style="left:457px"></div>
<div class="vsep" style="left:601px"></div>
<div class="vsep" style="left:683px"></div>
<div class="vsep" style="left:842px"></div>
<div class="vsep" style="left:992px"></div>
<div class="vsep" style="left:1082px"></div>
<div class="vsep" style="left:1307px"></div>
<div class="vsep" style="left:1457px"></div>
<div class="vsep" style="left:1607px"></div>
</div>
<div id="vsb"><div class="abs" style="left:2px;top:26px;width:21px;height:129px;background:#c1c1c1"></div><svg class="abs" style="left:6px;top:10px" width="13" height="7" viewBox="0 0 13 7"><path d="M0 7L6.5 0.3 13 7z" fill="#a3a3a3"/></svg><svg class="abs" style="left:6px;top:526.5px" width="13" height="7" viewBox="0 0 13 7"><path d="M0 0L6.5 6.7 13 0z" fill="#505050"/></svg></div>
<div id="hsb"><div class="abs" style="left:25px;top:2.5px;width:531px;height:21px;background:#c1c1c1"></div><svg class="abs" style="left:8.5px;top:6.5px" width="7" height="12" viewBox="0 0 7 12"><path d="M7 0L0.3 6 7 12z" fill="#a3a3a3"/></svg><svg class="abs" style="left:1597.5px;top:6.5px" width="7" height="12" viewBox="0 0 7 12"><path d="M0 0L6.7 6 0 12z" fill="#505050"/></svg></div>
<div id="corner"></div>
<div class="pbtn" style="left:210px;background:#fafafa"><svg style="position:absolute;left:17.3px;top:14.5px;overflow:visible" width="10.2" height="16.3" viewBox="0 0 320 512" preserveAspectRatio="none"><path fill="#dedede" d="M34.520 239.030L228.870 44.690c9.370-9.370 24.570-9.370 33.940 0l22.670 22.670c9.360 9.360 9.370 24.520.040 33.900L131.490 256l154.020 154.750c9.340 9.380 9.320 24.540-.040 33.900l-22.670 22.670c-9.370 9.370-24.570 9.370-33.940 0L34.520 272.970c-9.370-9.370-9.370-24.570 0-33.940z"/></svg></div>
<div class="pbtn" style="left:270px"><svg style="position:absolute;left:17.3px;top:14.5px;overflow:visible" width="10.2" height="16.3" viewBox="0 0 320 512" preserveAspectRatio="none"><path fill="#333" d="M285.476 272.971L91.132 467.314c-9.373 9.373-24.569 9.373-33.941 0l-22.667-22.667c-9.357-9.357-9.375-24.522-.040-33.901L188.505 256 34.484 101.255c-9.335-9.379-9.317-24.544.040-33.901l22.667-22.667c9.373-9.373 24.569-9.373 33.941 0L285.475 239.030c9.373 9.372 9.373 24.568.001 33.941z"/></svg></div>
<span class="t" style="left:341.60px;top:961px;font-size:16px;line-height:20px;letter-spacing:-0.478px;color:#333;">Page:</span>
<span class="t" style="left:397.90px;top:961px;font-size:16px;line-height:20px;letter-spacing:0.000px;color:#333;">1</span>
<span class="t" style="left:419.50px;top:961px;font-size:16px;line-height:20px;letter-spacing:0.465px;color:#1b7d9b;">more...</span>
<span class="t" style="left:479.20px;top:961px;font-size:16px;line-height:20px;letter-spacing:0.356px;color:#333;">Viewing 1-50</span>
<div class="btn" style="left:1438.2px;width:134.6px"></div>
<span class="t" style="left:1449.80px;top:963px;font-size:18px;line-height:22px;letter-spacing:-0.164px;color:#fff;text-shadow:0 1px 1px rgba(0,30,40,.5);">Export to CSV</span>
<div class="btn" style="left:1579.2px;width:105.4px"></div>
<span class="t" style="left:1590.10px;top:963px;font-size:18px;line-height:22px;letter-spacing:0.477px;color:#fff;text-shadow:0 1px 1px rgba(0,30,40,.5);">Download</span>
<div class="btn hi" style="left:1691px;width:174px"></div>
<span class="t" style="left:1701.80px;top:963px;font-size:18px;line-height:22px;letter-spacing:0.203px;color:#fff;text-shadow:0 1px 1px rgba(0,30,40,.5);">Upload IP Settings</span>
</div>
</body>
</html>
